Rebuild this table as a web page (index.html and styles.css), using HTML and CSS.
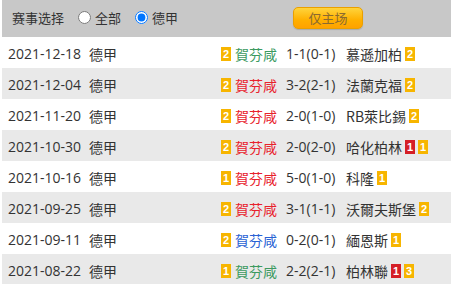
FILE: index.html
```html
<!DOCTYPE html>
<html lang="zh">
<head>
<meta charset="utf-8">
<link rel="stylesheet" href="styles.css">
</head>
<body>
<div class="wrap">
  <div class="filter">
    <span class="label">赛事选择</span>
    <label class="opt"><input type="radio" name="lg" class="radio"><span>全部</span></label>
    <label class="opt"><input type="radio" name="lg" class="radio" checked><span>德甲</span></label>
    <button class="home-btn">仅主场</button>
  </div>
  <div class="list">
    <div class="row">
      <span class="date">2021-12-18</span><span class="lg">德甲</span>
      <span class="home"><i class="b y">2</i><span class="green">賀芬咸</span></span>
      <span class="score">1-1(0-1)</span>
      <span class="away">慕遜加柏<i class="b y">2</i></span>
    </div>
    <div class="row alt">
      <span class="date">2021-12-04</span><span class="lg">德甲</span>
      <span class="home"><i class="b y">2</i><span class="red">賀芬咸</span></span>
      <span class="score">3-2(2-1)</span>
      <span class="away">法蘭克福<i class="b y">2</i></span>
    </div>
    <div class="row">
      <span class="date">2021-11-20</span><span class="lg">德甲</span>
      <span class="home"><i class="b y">2</i><span class="red">賀芬咸</span></span>
      <span class="score">2-0(1-0)</span>
      <span class="away">RB萊比錫<i class="b y">2</i></span>
    </div>
    <div class="row alt">
      <span class="date">2021-10-30</span><span class="lg">德甲</span>
      <span class="home"><i class="b y">2</i><span class="red">賀芬咸</span></span>
      <span class="score">2-0(2-0)</span>
      <span class="away">哈化柏林<i class="b r">1</i><i class="b y">1</i></span>
    </div>
    <div class="row">
      <span class="date">2021-10-16</span><span class="lg">德甲</span>
      <span class="home"><i class="b y">1</i><span class="red">賀芬咸</span></span>
      <span class="score">5-0(1-0)</span>
      <span class="away">科隆<i class="b y">1</i></span>
    </div>
    <div class="row alt">
      <span class="date">2021-09-25</span><span class="lg">德甲</span>
      <span class="home"><i class="b y">2</i><span class="red">賀芬咸</span></span>
      <span class="score">3-1(1-1)</span>
      <span class="away">沃爾夫斯堡<i class="b y">2</i></span>
    </div>
    <div class="row">
      <span class="date">2021-09-11</span><span class="lg">德甲</span>
      <span class="home"><i class="b y">2</i><span class="blue">賀芬咸</span></span>
      <span class="score">0-2(0-1)</span>
      <span class="away">緬恩斯<i class="b y">1</i></span>
    </div>
    <div class="row alt">
      <span class="date">2021-08-22</span><span class="lg">德甲</span>
      <span class="home"><i class="b y">1</i><span class="green">賀芬咸</span></span>
      <span class="score">2-2(2-1)</span>
      <span class="away">柏林聯<i class="b r">1</i><i class="b y">3</i></span>
    </div>
  </div>
</div>
</body>
</html>
```
FILE: styles.css
```css
* { box-sizing: border-box; }
html, body { margin: 0; padding: 0; background: #fff; }
body {
  font-family: "Open Sans", "Noto Sans CJK SC", sans-serif;
  font-size: 14px;
  color: #333;
}
.wrap { padding-left: 2px; }
.filter {
  height: 37px;
  background: #c8c8c8;
  display: flex;
  align-items: center;
  padding-left: 10px;
  padding-bottom: 2px;
  font-family: "Noto Sans CJK SC", sans-serif;
  font-size: 13px;
}
.label { margin-right: 14px; }
.opt { display: flex; align-items: center; margin-right: 14px; }
.opt:last-of-type { margin-right: 0; }
.radio {
  width: 13px; height: 13px;
  margin: 0 4px 0 0;
  accent-color: #0075ff;
}
.home-btn {
  margin-left: 115px;
  width: 70px;
  height: 22px;
  border: 1px solid #eaa000;
  border-radius: 5px;
  background: linear-gradient(#ffd43c, #ffb000 60%, #ffa200);
  color: #8a6a30;
  font-family: "Noto Sans CJK SC", sans-serif;
  font-size: 13px;
  padding: 0;
  box-shadow: 0 1px 1px rgba(0,0,0,0.15);
}
.row {
  height: 31px;
  display: grid;
  grid-template-columns: 81px 110px 87px 60px 1fr;
  align-items: center;
  padding-left: 6px;
  padding-top: 2px;
}
.row.alt { background: #e9e9e9; }
.lg { font-family: "Noto Sans CJK SC", sans-serif; }
.home {
  display: flex; justify-content: flex-end; align-items: center;
  font-family: "Noto Sans CJK SC", sans-serif;
  padding-right: 9px;
}
.away {
  display: flex; align-items: center;
  font-family: "Noto Sans CJK SC", sans-serif;
}
.b {
  display: inline-block;
  font-style: normal;
  width: 10px; height: 14px;
  line-height: 14px;
  text-align: center;
  color: #fff;
  font-family: "Liberation Sans", sans-serif;
  font-weight: bold;
  font-size: 11px;
  margin-left: 3px;
}
.home .b { margin: 0 4px 0 0; }
.b.y { background: #f7b500; }
.b.r { background: #d51f26; }
.green { color: #3c9a5f; }
.red { color: #e8222c; }
.blue { color: #2a62d4; }
```
